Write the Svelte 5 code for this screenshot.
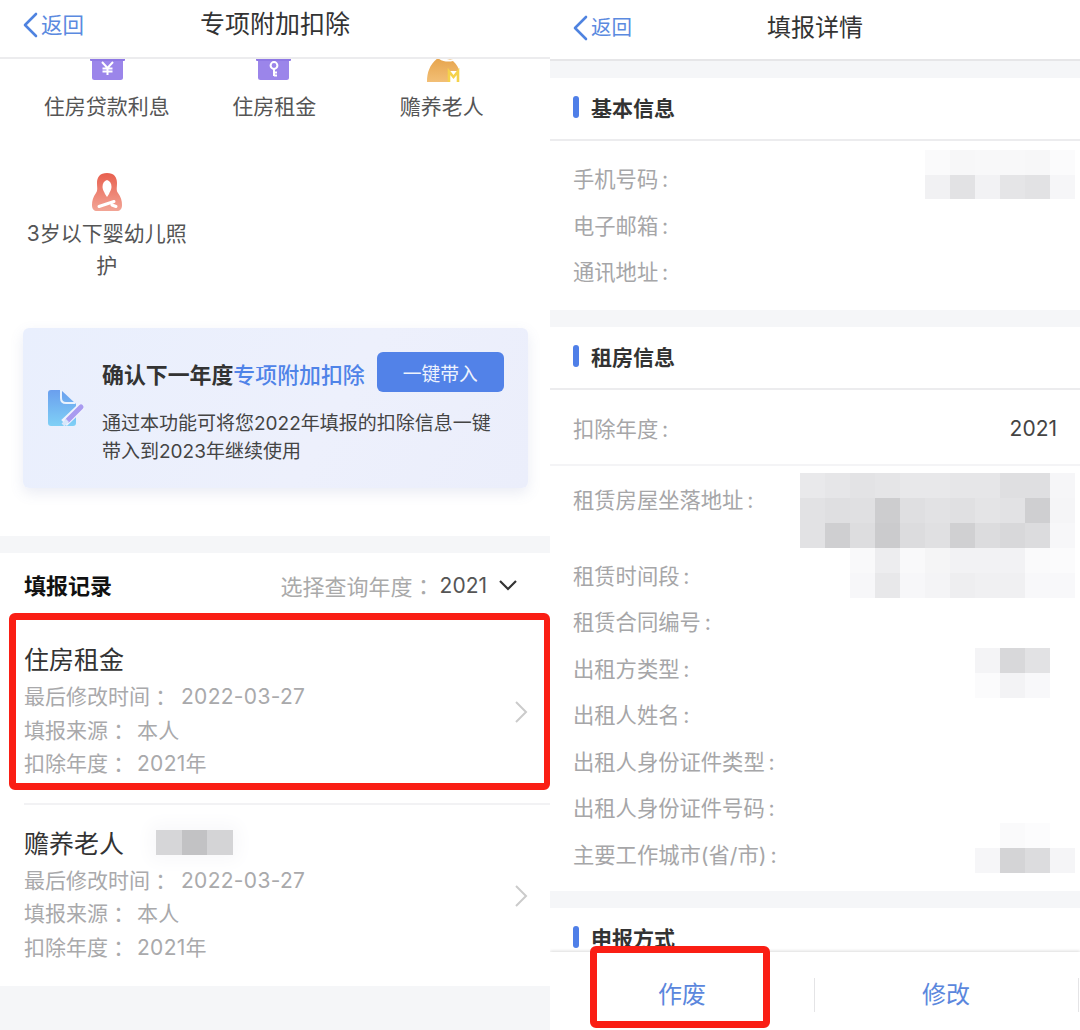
<script>
  const details = [
    { text: '最后修改时间', val: '2022-03-27', gap: 10 },
    { text: '填报来源', val: '本人', gap: 8 },
    { text: '扣除年度', val: '2021年', gap: 8 }
  ];
  const colon = '\uFF1A';
  const label = (s) => s + '\u2009:';
  const basic = ['手机号码', '电子邮箱', '通讯地址'];
  const rent = ['租赁时间段', '租赁合同编号', '出租方类型', '出租人姓名', '出租人身份证件类型', '出租人身份证件号码', '主要工作城市(省/市)'];
  const leftMosaics = [
    { x: 156, y: 830, w: 25.7, h: 25, halo: true, rows: [['#d6d6d8', '#c2c2c4', '#d4d4d6']] }
  ];
  const rightMosaics = [
    { x: 375, y: 150, w: 25, h: 24.7, rows: [
      ['#fafafb', '#f7f7f8', '#f8f8f9', '#f8f8f9', '#f7f7f8', '#fbfbfc'],
      ['#f1f1f3', '#e2e2e4', '#f2f2f4', '#e5e5e7', '#e2e2e4', '#f6f6f8']
    ] },
    { x: 250, y: 473, w: 25, h: 25, rows: [
      ['#e9e9eb', '#e6e6e8', '#e3e3e5', '#e5e5e7', '#e8e8ea', '#e8e8ea', '#e6e6e8', '#e6e6e8', '#dfdfe1', '#dfdfe1', '#f6f6f8'],
      ['#e2e2e4', '#dfdfe1', '#e0e0e2', '#cdcdcf', '#dfdfe1', '#e2e2e4', '#e0e0e2', '#e4e4e6', '#e2e2e4', '#cfcfd1', '#f5f5f7'],
      ['#e2e2e4', '#cfcfd1', '#dddddf', '#cbcbcd', '#dcdcde', '#e0e0e2', '#d0d0d2', '#dcdcde', '#d8d8da', '#dcdcde', '#f7f7f9']
    ] },
    { x: 300, y: 548, w: 25, h: 25, rows: [
      ['#f9f9fa', '#ededef', '#f9f9fa', '#f5f5f6', '#f2f2f4', '#f2f2f4', '#f2f2f4', '#fafafb', '#fbfbfc'],
      ['#f7f7f9', '#e8e8ea', '#f7f7f9', '#f4f4f6', '#eeeef0', '#f0f0f2', '#f0f0f2', '#f8f8fa', '#f8f8fa']
    ] },
    { x: 425, y: 648, w: 25, h: 25, rows: [
      ['#f4f4f6', '#d8d8da', '#e2e2e4'],
      ['#fbfbfc', '#f3f3f5', '#f8f8fa']
    ] },
    { x: 425, y: 823, w: 25, h: 25, rows: [
      ['#ffffff', '#fafafb', '#fcfcfd', '#ffffff'],
      ['#f6f6f8', '#d4d4d6', '#dcdcde', '#f5f5f7']
    ] }
  ];
</script>

{#snippet back()}
  <span class="back">
    <svg class="back-icon" width="16" height="26" viewBox="0 0 16 26"><path d="M14 2 L3 13 L14 24" fill="none" stroke="#4f83e0" stroke-width="2.6" stroke-linecap="round" stroke-linejoin="round"/></svg>
    返回
  </span>
{/snippet}

{#snippet mosaic(m)}
  <div class="mosaic" class:halo={m.halo} style="left:{m.x}px;top:{m.y}px">
    {#each m.rows as row}
      <div class="mrow">
        {#each row as c}
          <i style="width:{m.w}px;height:{m.h}px;background:{c}"></i>
        {/each}
      </div>
    {/each}
  </div>
{/snippet}

{#snippet record(name)}
  <div class="record">
    <div class="rec-title">{name}</div>
    {#each details as d}
      <div class="rec-line"><span>{d.text}</span><span class="colon" style="margin-right:{d.gap}px">{colon}</span><span class="rec-val">{d.val}</span></div>
    {/each}
    <svg class="rec-arrow" width="14" height="24" viewBox="0 0 14 24"><path d="M2 2 L12 12 L2 22" fill="none" stroke="#cbcbcb" stroke-width="2"/></svg>
  </div>
{/snippet}

<div class="page">
  <section class="panel left">
    <header class="nav">
      {@render back()}
      <h1>专项附加扣除</h1>
    </header>
    <div class="scroll">
      <div class="grid">
        <div class="cell">
          <svg width="44" height="44" viewBox="0 0 44 44">
            <rect x="7" y="14" width="31" height="25" rx="2.5" fill="#9b85ea"/>
            <rect x="5" y="14" width="35" height="6" rx="1" fill="#8f78e4"/>
            <path d="M17 21 L22.5 27 L28 21 M22.5 27 V34 M17.5 27.5 H27.5 M17.5 30.5 H27.5" fill="none" stroke="#fff" stroke-width="2"/>
          </svg>
          <span>住房贷款利息</span>
        </div>
        <div class="cell">
          <svg width="44" height="44" viewBox="0 0 44 44">
            <rect x="6" y="14" width="31" height="25" rx="2.5" fill="#9b85ea"/>
            <rect x="4" y="14" width="35" height="6" rx="1" fill="#8f78e4"/>
            <circle cx="22" cy="24.5" r="3.4" fill="none" stroke="#fff" stroke-width="2"/>
            <path d="M22 28 V35 M22 31.5 H25 M22 34.5 H25" fill="none" stroke="#fff" stroke-width="2"/>
          </svg>
          <span>住房租金</span>
        </div>
        <div class="cell">
          <svg width="44" height="44" viewBox="0 0 44 44">
            <defs>
              <linearGradient id="og" x1="0" y1="0" x2="0" y2="1"><stop offset="0" stop-color="#e6a44c"/><stop offset="1" stop-color="#f2bf76"/></linearGradient>
            </defs>
            <ellipse cx="30" cy="15" rx="6" ry="3.5" fill="#e6a44c"/>
            <path d="M7 41 C7 31 10 23 18 17 C22 21 29 21 33 20 C37 24 39 27 39 30 L30 30 L30 41 Z" fill="url(#og)"/>
            <path d="M29 41 V30.5 L33.5 36 L38 30.5 V41" fill="none" stroke="#f5d24a" stroke-width="2.6"/>
          </svg>
          <span>赡养老人</span>
        </div>
        <div class="cell">
          <svg width="44" height="44" viewBox="0 0 44 44">
            <defs>
              <linearGradient id="rg" x1="0" y1="0" x2="0" y2="1"><stop offset="0" stop-color="#e85f4e"/><stop offset="1" stop-color="#f2a596"/></linearGradient>
            </defs>
            <path d="M22 5 C29 5 32 9 32 15 C32 20 31 22 33 25 C36 29 37 33 37 37 C37 41 35 43 32 43 H12 C9 43 7 41 7 37 C7 33 8 29 11 25 C13 22 12 20 12 15 C12 9 15 5 22 5Z" fill="url(#rg)"/>
            <path d="M22 12 C19 13 17.500 15.500 17.500 19 C17.500 22 19.500 24 20 26 L22 29 L24 26 C24.500 24 26.500 22 26.500 19 C26.500 15.500 25 13 22 12Z" fill="#fff"/>
            <path d="M14 38.500 L29 33.500 M27 37 L31 38.500" fill="none" stroke="#fff" stroke-width="3" stroke-linecap="round"/>
          </svg>
          <span>3岁以下婴幼儿照护</span>
        </div>
      </div>

      <div class="card">
        <svg class="card-icon" width="38" height="36" viewBox="0 0 38 36">
          <defs>
            <linearGradient id="bg" x1="0" y1="0" x2="0" y2="1"><stop offset="0" stop-color="#6a9fee"/><stop offset="1" stop-color="#7fd0f6"/></linearGradient>
          </defs>
          <path d="M3 0 H13 L28 14 V33 C28 35 27 36 25 36 H3 C1 36 0 35 0 33 V3 C0 1 1 0 3 0Z" fill="url(#bg)"/>
          <path d="M13 0 V8 C13 11 15 13 18 13 H27" fill="none" stroke="#eaf2fd" stroke-width="2"/>
          <path d="M34 16 L16 33" stroke="#eef2fd" stroke-width="8"/>
          <path d="M33 17 L20 30" stroke="#a99bf0" stroke-width="5" stroke-linecap="round"/>
          <path d="M19.500 30.500 L15 35" stroke="#d8e6fa" stroke-width="4"/>
        </svg>
        <div class="card-body">
          <div class="card-top">
            <div class="card-title">确认下一年度<b>专项附加扣除</b></div>
            <button class="one-click">一键带入</button>
          </div>
          <p class="card-desc">通过本功能可将您2022年填报的扣除信息一键带入到2023年继续使用</p>
        </div>
      </div>

      <div class="gap"></div>

      <div class="rec-head">
        <strong>填报记录</strong>
        <div class="year">
          <span class="year-key">选择查询年度<span class="colon">{colon}</span></span>
          <span class="year-val">2021</span>
          <svg width="20" height="12" viewBox="0 0 20 12"><path d="M2 2 L10 10 L18 2" fill="none" stroke="#333" stroke-width="2.2"/></svg>
        </div>
      </div>
      {@render record('住房租金')}
      <div class="rec-sep"></div>
      {@render record('赡养老人')}
      <div class="rest"></div>
    </div>
    {#each leftMosaics as m}{@render mosaic(m)}{/each}
    <div class="mark mark-left"></div>
  </section>

  <section class="panel right">
    <header class="nav nav-r">
      {@render back()}
      <h1>填报详情</h1>
    </header>
    <div class="scroll">
      <div class="band"></div>
      <h2 class="sec"><i></i>基本信息</h2>
      <div class="rows basic">
        {#each basic as b}<div class="row">{label(b)}</div>{/each}
      </div>
      <div class="band"></div>
      <h2 class="sec"><i></i>租房信息</h2>
      <div class="row year-row"><span>{label('扣除年度')}</span><em>2021</em></div>
      <div class="rows rent">
        <div class="row addr">{label('租赁房屋坐落地址')}</div>
        {#each rent as r}<div class="row">{label(r)}</div>{/each}
      </div>
      <div class="band"></div>
      <h2 class="sec"><i></i>申报方式</h2>
    </div>
    <footer class="foot">
      <span>作废</span>
      <span>修改</span>
    </footer>
    {#each rightMosaics as m}{@render mosaic(m)}{/each}
    <div class="mark mark-right"></div>
  </section>
</div>

<style>
  :global(body) { margin: 0; background: #fff; }
  .page {
    display: flex;
    width: 1080px;
    height: 1030px;
    overflow: hidden;
    font-family: Inter, "Noto Sans CJK SC", sans-serif;
    font-size: 21px;
    color: #333;
  }
  .panel { position: relative; display: flex; flex-direction: column; height: 1030px; overflow: hidden; background: #fff; }
  .left { width: 550px; }
  .right { width: 530px; }

  .nav {
    position: relative;
    z-index: 2;
    flex: none;
    height: 57px;
    display: flex;
    align-items: center;
    justify-content: center;
    background: #fff;
    border-bottom: 2px solid #ececee;
  }
  .nav h1 { margin: 0; font-size: 25px; font-weight: 400; color: #333; line-height: 1; margin-top: -8px; }
  .back {
    position: absolute;
    left: 22px;
    top: 12px;
    display: flex;
    align-items: center;
    gap: 3px;
    font-size: 21.500px;
    color: #5b8ae0;
    line-height: 26px;
  }
  .nav-r { height: 59px; border-bottom-color: #e6e6e8; }
  .nav-r h1 { font-size: 24px; margin-top: -4px; }
  .nav-r .back { top: 15px; font-size: 20.500px; }

  .scroll { flex: 1; min-height: 0; overflow: hidden; }

  .grid {
    display: grid;
    grid-template-columns: repeat(3, 167.500px);
    row-gap: 45px;
    padding-left: 23px;
    margin-top: -18px;
  }
  .cell { display: flex; flex-direction: column; align-items: center; text-align: center; line-height: 32px; color: #555; font-size: 21px; }
  .cell svg { display: block; margin-bottom: 6px; }

  .card {
    display: flex;
    align-items: center;
    gap: 16px;
    box-sizing: border-box;
    width: 505px;
    height: 160px;
    margin: 46px 0 48px 23px;
    padding-left: 25px;
    border-radius: 6px;
    background: linear-gradient(120deg, #e9effd 0%, #edf0fc 60%, #ebeefb 100%);
    box-shadow: 0 5px 14px rgba(90, 110, 170, 0.13);
  }
  .card-icon { flex: none; }
  .card-body { flex: 1; min-width: 0; padding-top: 2px; }
  .card-top { display: flex; align-items: center; gap: 12px; }
  .card-title { font-size: 21.900px; font-weight: 700; color: #333; white-space: nowrap; margin-top: 2px; }
  .card-title b { font-weight: 500; color: #4f83e8; }
  .one-click {
    width: 127px;
    height: 40px;
    padding: 0;
    border: 0;
    border-radius: 6px;
    background: #5282e8;
    color: #eef3fd;
    font: inherit;
    font-size: 18.800px;
  }
  .card-desc { margin: 18px 0 0; width: 395px; font-size: 19px; line-height: 28px; color: #444; }

  .colon { font-family: "Noto Sans CJK TC", sans-serif; }

  .gap { height: 17px; background: #f5f6f8; }
  .rec-head { display: flex; align-items: center; justify-content: space-between; height: 66px; padding: 0 32px 4px 24px; box-sizing: border-box; }
  .rec-head strong { font-size: 22px; font-weight: 700; color: #111; }
  .year { display: flex; align-items: center; font-size: 22px; margin-top: 2px; }
  .year-key { color: #aaa; }
  .year-val { color: #555; font-size: 21px; margin-left: 5px; margin-right: 11px; }

  .record { position: relative; padding: 24px 0 21px 24px; }
  .rec-title { font-size: 25px; line-height: 34px; color: #333; margin-bottom: 3px; }
  .rec-line { display: flex; height: 33.500px; line-height: 33.500px; color: #a9a9ab; font-size: 21px; }
  .rec-val { letter-spacing: 0.300px; }
  .rec-arrow { position: absolute; right: 22px; top: 81px; }
  .rec-sep { height: 2px; margin: 1px 0 -2px 24px; background: #f2f2f4; }
  .rest { height: 60px; margin-top: 1px; background: #f5f6f8; }

  .band { height: 17px; background: #f5f6f8; }
  .sec {
    display: flex;
    align-items: center;
    gap: 12px;
    box-sizing: border-box;
    height: 63px;
    margin: 0;
    padding: 0 0 3px 23px;
    border-bottom: 2px solid #ececee;
    font-size: 21px;
    font-weight: 700;
    color: #333;
  }
  .sec i { display: block; width: 6px; height: 22px; border-radius: 3px; background: #4f7fe8; }
  .rows { padding-bottom: 13px; }
  .basic { padding-top: 15px; padding-bottom: 14px; }
  .row { box-sizing: border-box; height: 46.500px; line-height: 46.500px; padding: 0 23px; color: #a6a6a8; font-size: 21.300px; }
  .addr { height: 76px; }
  .rent { padding-top: 11px; }
  .year-row {
    display: flex;
    justify-content: space-between;
    height: 76px;
    line-height: 78px;
    border-bottom: 2px solid #f4f4f6;
  }
  .year-row em { font-style: normal; color: #444; font-size: 21px; }

  .foot {
    position: relative;
    z-index: 2;
    flex: none;
    display: grid;
    grid-template-columns: 264px 264px;
    height: 78px;
    box-sizing: border-box;
    padding-top: 3px;
    background: #fff;
    box-shadow: 0 -1px 3px rgba(0, 0, 0, 0.14);
  }
  .foot span {
    display: flex;
    align-items: center;
    justify-content: center;
    color: #5b87dd;
    font-size: 24px;
    position: relative;
  }
  .foot span::after {
    content: "";
    position: absolute;
    right: -1px;
    top: 23px;
    width: 1px;
    height: 34px;
    background: #e4e4e6;
  }

  .mosaic { position: absolute; z-index: 1; }
  .halo { box-shadow: 0 0 18px 6px #f8f8fa; }
  .mrow { display: flex; }
  .mrow i { display: block; }

  .mark { position: absolute; z-index: 3; box-sizing: border-box; border: 7px solid #fa1e14; border-radius: 6px; }
  .mark-left { left: 9px; top: 613px; width: 541px; height: 177px; border-right-width: 6px; }
  .mark-right { left: 40px; top: 946px; width: 180px; height: 82px; }
</style>
